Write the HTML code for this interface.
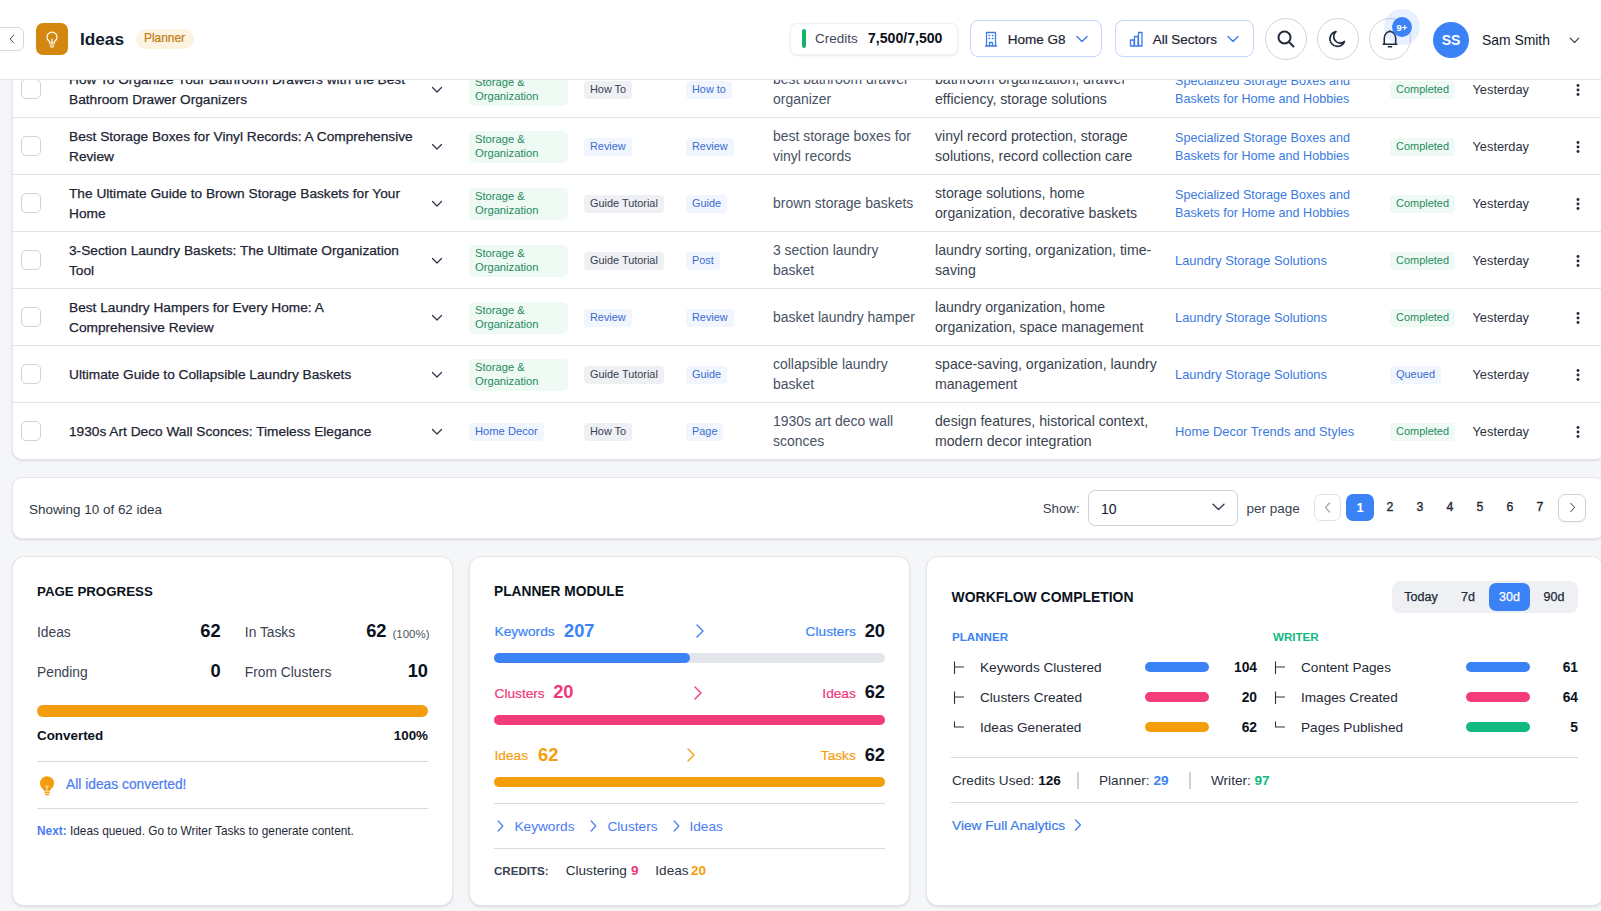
<!DOCTYPE html>
<html><head><meta charset="utf-8"><title>Ideas</title>
<style>
html,body{margin:0;padding:0;}
body{width:1601px;height:911px;overflow:hidden;position:relative;background:#f5f6f8;font-family:"Liberation Sans",sans-serif;}
.t{position:absolute;white-space:nowrap;}
.r{position:absolute;}
.r svg{display:block;}
.bd{position:absolute;border-radius:4px;white-space:nowrap;font-family:"Liberation Sans",sans-serif;}
</style></head><body>
<div class="r" style="left:12px;top:20px;width:1593px;height:440px;background:#fff;border:1px solid #e3e6ea;border-radius:0 0 10px 10px;border-top:none;box-sizing:border-box;box-shadow:0 1px 2px rgba(16,24,40,0.12);"></div>
<div class="r" style="left:12px;top:117px;width:1600px;height:1px;background:#dfe3e8;"></div>
<div class="r" style="left:21px;top:79px;width:20px;height:20px;border:1px solid #cdd3dc;border-radius:5px;box-sizing:border-box;background:#fff;"></div>
<div class="t " style="left:69px;top:69.70px;font-size:13.7px;line-height:20px;color:#1d2433;font-weight:400;-webkit-text-stroke:0.25px #1d2433;">How To Organize Your Bathroom Drawers with the Best</div><div class="t " style="left:69px;top:89.70px;font-size:13.7px;line-height:20px;color:#1d2433;font-weight:400;-webkit-text-stroke:0.25px #1d2433;">Bathroom Drawer Organizers</div>
<div class="r" style="left:431px;top:85.5px;"><svg width="12" height="8" viewBox="0 0 12 8"><path d="M1.5 1.5 L6 6 L10.5 1.5" fill="none" stroke="#2a3346" stroke-width="1.2" stroke-linecap="round" stroke-linejoin="round"/></svg></div>
<div class="r" style="left:469px;top:74.0px;width:99px;height:32px;background:#effaf5;border-radius:5px;"></div>
<div class="t " style="left:475px;top:75.30px;font-size:11.2px;line-height:14px;color:#1f8a5c;font-weight:400;">Storage &</div><div class="t " style="left:475px;top:89.30px;font-size:11.2px;line-height:14px;color:#1f8a5c;font-weight:400;">Organization</div>
<div class="bd" style="left:584px;top:81.0px;height:18px;line-height:16px;padding:0 6px;background:#eef0f3;color:#374151;font-size:10.9px;">How To</div>
<div class="bd" style="left:686px;top:81.0px;height:18px;line-height:16px;padding:0 6px;background:#f0f5fe;color:#3a6cd0;font-size:10.9px;">How to</div>
<div class="t " style="left:773px;top:69.00px;font-size:13.95px;line-height:20px;color:#485264;font-weight:400;">best bathroom drawer</div><div class="t " style="left:773px;top:89.00px;font-size:13.95px;line-height:20px;color:#485264;font-weight:400;">organizer</div>
<div class="t " style="left:935px;top:69.00px;font-size:14.1px;line-height:20px;color:#3a4250;font-weight:400;">bathroom organization, drawer</div><div class="t " style="left:935px;top:89.00px;font-size:14.1px;line-height:20px;color:#3a4250;font-weight:400;">efficiency, storage solutions</div>
<div class="t " style="left:1175px;top:71.70px;font-size:12.6px;line-height:18px;color:#3b7ae0;font-weight:400;">Specialized Storage Boxes and</div><div class="t " style="left:1175px;top:89.70px;font-size:12.6px;line-height:18px;color:#3b7ae0;font-weight:400;">Baskets for Home and Hobbies</div>
<div class="bd" style="left:1390px;top:81.0px;height:18px;line-height:16px;padding:0 6px;background:#effaf5;color:#1f8a5c;font-size:10.96px;">Completed</div>
<div class="t " style="left:1472.5px;top:81.76px;font-size:12.8px;line-height:16px;color:#2b3240;font-weight:400;">Yesterday</div>
<div class="r" style="left:1576px;top:83.0px;"><svg width="4" height="14" viewBox="0 0 4 14"><circle cx="2" cy="2.5" r="1.45" fill="#1f2a44"/><circle cx="2" cy="7" r="1.45" fill="#1f2a44"/><circle cx="2" cy="11.5" r="1.45" fill="#1f2a44"/></svg></div>
<div class="r" style="left:12px;top:174px;width:1600px;height:1px;background:#dfe3e8;"></div>
<div class="r" style="left:21px;top:136px;width:20px;height:20px;border:1px solid #cdd3dc;border-radius:5px;box-sizing:border-box;background:#fff;"></div>
<div class="t " style="left:69px;top:126.70px;font-size:13.7px;line-height:20px;color:#1d2433;font-weight:400;-webkit-text-stroke:0.25px #1d2433;">Best Storage Boxes for Vinyl Records: A Comprehensive</div><div class="t " style="left:69px;top:146.70px;font-size:13.7px;line-height:20px;color:#1d2433;font-weight:400;-webkit-text-stroke:0.25px #1d2433;">Review</div>
<div class="r" style="left:431px;top:142.5px;"><svg width="12" height="8" viewBox="0 0 12 8"><path d="M1.5 1.5 L6 6 L10.5 1.5" fill="none" stroke="#2a3346" stroke-width="1.2" stroke-linecap="round" stroke-linejoin="round"/></svg></div>
<div class="r" style="left:469px;top:131.0px;width:99px;height:32px;background:#effaf5;border-radius:5px;"></div>
<div class="t " style="left:475px;top:132.30px;font-size:11.2px;line-height:14px;color:#1f8a5c;font-weight:400;">Storage &</div><div class="t " style="left:475px;top:146.30px;font-size:11.2px;line-height:14px;color:#1f8a5c;font-weight:400;">Organization</div>
<div class="bd" style="left:584px;top:138.0px;height:18px;line-height:16px;padding:0 6px;background:#f0f5fe;color:#3a6cd0;font-size:10.9px;">Review</div>
<div class="bd" style="left:686px;top:138.0px;height:18px;line-height:16px;padding:0 6px;background:#f0f5fe;color:#3a6cd0;font-size:10.9px;">Review</div>
<div class="t " style="left:773px;top:126.00px;font-size:13.95px;line-height:20px;color:#485264;font-weight:400;">best storage boxes for</div><div class="t " style="left:773px;top:146.00px;font-size:13.95px;line-height:20px;color:#485264;font-weight:400;">vinyl records</div>
<div class="t " style="left:935px;top:126.00px;font-size:14.1px;line-height:20px;color:#3a4250;font-weight:400;">vinyl record protection, storage</div><div class="t " style="left:935px;top:146.00px;font-size:14.1px;line-height:20px;color:#3a4250;font-weight:400;">solutions, record collection care</div>
<div class="t " style="left:1175px;top:128.70px;font-size:12.6px;line-height:18px;color:#3b7ae0;font-weight:400;">Specialized Storage Boxes and</div><div class="t " style="left:1175px;top:146.70px;font-size:12.6px;line-height:18px;color:#3b7ae0;font-weight:400;">Baskets for Home and Hobbies</div>
<div class="bd" style="left:1390px;top:138.0px;height:18px;line-height:16px;padding:0 6px;background:#effaf5;color:#1f8a5c;font-size:10.96px;">Completed</div>
<div class="t " style="left:1472.5px;top:138.76px;font-size:12.8px;line-height:16px;color:#2b3240;font-weight:400;">Yesterday</div>
<div class="r" style="left:1576px;top:140.0px;"><svg width="4" height="14" viewBox="0 0 4 14"><circle cx="2" cy="2.5" r="1.45" fill="#1f2a44"/><circle cx="2" cy="7" r="1.45" fill="#1f2a44"/><circle cx="2" cy="11.5" r="1.45" fill="#1f2a44"/></svg></div>
<div class="r" style="left:12px;top:231px;width:1600px;height:1px;background:#dfe3e8;"></div>
<div class="r" style="left:21px;top:193px;width:20px;height:20px;border:1px solid #cdd3dc;border-radius:5px;box-sizing:border-box;background:#fff;"></div>
<div class="t " style="left:69px;top:183.70px;font-size:13.7px;line-height:20px;color:#1d2433;font-weight:400;-webkit-text-stroke:0.25px #1d2433;">The Ultimate Guide to Brown Storage Baskets for Your</div><div class="t " style="left:69px;top:203.70px;font-size:13.7px;line-height:20px;color:#1d2433;font-weight:400;-webkit-text-stroke:0.25px #1d2433;">Home</div>
<div class="r" style="left:431px;top:199.5px;"><svg width="12" height="8" viewBox="0 0 12 8"><path d="M1.5 1.5 L6 6 L10.5 1.5" fill="none" stroke="#2a3346" stroke-width="1.2" stroke-linecap="round" stroke-linejoin="round"/></svg></div>
<div class="r" style="left:469px;top:188.0px;width:99px;height:32px;background:#effaf5;border-radius:5px;"></div>
<div class="t " style="left:475px;top:189.30px;font-size:11.2px;line-height:14px;color:#1f8a5c;font-weight:400;">Storage &</div><div class="t " style="left:475px;top:203.30px;font-size:11.2px;line-height:14px;color:#1f8a5c;font-weight:400;">Organization</div>
<div class="bd" style="left:584px;top:195.0px;height:18px;line-height:16px;padding:0 6px;background:#eef0f3;color:#374151;font-size:10.9px;">Guide Tutorial</div>
<div class="bd" style="left:686px;top:195.0px;height:18px;line-height:16px;padding:0 6px;background:#f0f5fe;color:#3a6cd0;font-size:10.9px;">Guide</div>
<div class="t " style="left:773px;top:193.00px;font-size:13.95px;line-height:20px;color:#485264;font-weight:400;">brown storage baskets</div>
<div class="t " style="left:935px;top:183.00px;font-size:14.1px;line-height:20px;color:#3a4250;font-weight:400;">storage solutions, home</div><div class="t " style="left:935px;top:203.00px;font-size:14.1px;line-height:20px;color:#3a4250;font-weight:400;">organization, decorative baskets</div>
<div class="t " style="left:1175px;top:185.70px;font-size:12.6px;line-height:18px;color:#3b7ae0;font-weight:400;">Specialized Storage Boxes and</div><div class="t " style="left:1175px;top:203.70px;font-size:12.6px;line-height:18px;color:#3b7ae0;font-weight:400;">Baskets for Home and Hobbies</div>
<div class="bd" style="left:1390px;top:195.0px;height:18px;line-height:16px;padding:0 6px;background:#effaf5;color:#1f8a5c;font-size:10.96px;">Completed</div>
<div class="t " style="left:1472.5px;top:195.76px;font-size:12.8px;line-height:16px;color:#2b3240;font-weight:400;">Yesterday</div>
<div class="r" style="left:1576px;top:197.0px;"><svg width="4" height="14" viewBox="0 0 4 14"><circle cx="2" cy="2.5" r="1.45" fill="#1f2a44"/><circle cx="2" cy="7" r="1.45" fill="#1f2a44"/><circle cx="2" cy="11.5" r="1.45" fill="#1f2a44"/></svg></div>
<div class="r" style="left:12px;top:288px;width:1600px;height:1px;background:#dfe3e8;"></div>
<div class="r" style="left:21px;top:250px;width:20px;height:20px;border:1px solid #cdd3dc;border-radius:5px;box-sizing:border-box;background:#fff;"></div>
<div class="t " style="left:69px;top:240.70px;font-size:13.7px;line-height:20px;color:#1d2433;font-weight:400;-webkit-text-stroke:0.25px #1d2433;">3-Section Laundry Baskets: The Ultimate Organization</div><div class="t " style="left:69px;top:260.70px;font-size:13.7px;line-height:20px;color:#1d2433;font-weight:400;-webkit-text-stroke:0.25px #1d2433;">Tool</div>
<div class="r" style="left:431px;top:256.5px;"><svg width="12" height="8" viewBox="0 0 12 8"><path d="M1.5 1.5 L6 6 L10.5 1.5" fill="none" stroke="#2a3346" stroke-width="1.2" stroke-linecap="round" stroke-linejoin="round"/></svg></div>
<div class="r" style="left:469px;top:245.0px;width:99px;height:32px;background:#effaf5;border-radius:5px;"></div>
<div class="t " style="left:475px;top:246.30px;font-size:11.2px;line-height:14px;color:#1f8a5c;font-weight:400;">Storage &</div><div class="t " style="left:475px;top:260.30px;font-size:11.2px;line-height:14px;color:#1f8a5c;font-weight:400;">Organization</div>
<div class="bd" style="left:584px;top:252.0px;height:18px;line-height:16px;padding:0 6px;background:#eef0f3;color:#374151;font-size:10.9px;">Guide Tutorial</div>
<div class="bd" style="left:686px;top:252.0px;height:18px;line-height:16px;padding:0 6px;background:#f0f5fe;color:#3a6cd0;font-size:10.9px;">Post</div>
<div class="t " style="left:773px;top:240.00px;font-size:13.95px;line-height:20px;color:#485264;font-weight:400;">3 section laundry</div><div class="t " style="left:773px;top:260.00px;font-size:13.95px;line-height:20px;color:#485264;font-weight:400;">basket</div>
<div class="t " style="left:935px;top:240.00px;font-size:14.1px;line-height:20px;color:#3a4250;font-weight:400;">laundry sorting, organization, time-</div><div class="t " style="left:935px;top:260.00px;font-size:14.1px;line-height:20px;color:#3a4250;font-weight:400;">saving</div>
<div class="t " style="left:1175px;top:251.70px;font-size:12.9px;line-height:18px;color:#3b7ae0;font-weight:400;">Laundry Storage Solutions</div>
<div class="bd" style="left:1390px;top:252.0px;height:18px;line-height:16px;padding:0 6px;background:#effaf5;color:#1f8a5c;font-size:10.96px;">Completed</div>
<div class="t " style="left:1472.5px;top:252.76px;font-size:12.8px;line-height:16px;color:#2b3240;font-weight:400;">Yesterday</div>
<div class="r" style="left:1576px;top:254.0px;"><svg width="4" height="14" viewBox="0 0 4 14"><circle cx="2" cy="2.5" r="1.45" fill="#1f2a44"/><circle cx="2" cy="7" r="1.45" fill="#1f2a44"/><circle cx="2" cy="11.5" r="1.45" fill="#1f2a44"/></svg></div>
<div class="r" style="left:12px;top:345px;width:1600px;height:1px;background:#dfe3e8;"></div>
<div class="r" style="left:21px;top:307px;width:20px;height:20px;border:1px solid #cdd3dc;border-radius:5px;box-sizing:border-box;background:#fff;"></div>
<div class="t " style="left:69px;top:297.70px;font-size:13.7px;line-height:20px;color:#1d2433;font-weight:400;-webkit-text-stroke:0.25px #1d2433;">Best Laundry Hampers for Every Home: A</div><div class="t " style="left:69px;top:317.70px;font-size:13.7px;line-height:20px;color:#1d2433;font-weight:400;-webkit-text-stroke:0.25px #1d2433;">Comprehensive Review</div>
<div class="r" style="left:431px;top:313.5px;"><svg width="12" height="8" viewBox="0 0 12 8"><path d="M1.5 1.5 L6 6 L10.5 1.5" fill="none" stroke="#2a3346" stroke-width="1.2" stroke-linecap="round" stroke-linejoin="round"/></svg></div>
<div class="r" style="left:469px;top:302.0px;width:99px;height:32px;background:#effaf5;border-radius:5px;"></div>
<div class="t " style="left:475px;top:303.30px;font-size:11.2px;line-height:14px;color:#1f8a5c;font-weight:400;">Storage &</div><div class="t " style="left:475px;top:317.30px;font-size:11.2px;line-height:14px;color:#1f8a5c;font-weight:400;">Organization</div>
<div class="bd" style="left:584px;top:309.0px;height:18px;line-height:16px;padding:0 6px;background:#f0f5fe;color:#3a6cd0;font-size:10.9px;">Review</div>
<div class="bd" style="left:686px;top:309.0px;height:18px;line-height:16px;padding:0 6px;background:#f0f5fe;color:#3a6cd0;font-size:10.9px;">Review</div>
<div class="t " style="left:773px;top:307.00px;font-size:13.95px;line-height:20px;color:#485264;font-weight:400;">basket laundry hamper</div>
<div class="t " style="left:935px;top:297.00px;font-size:14.1px;line-height:20px;color:#3a4250;font-weight:400;">laundry organization, home</div><div class="t " style="left:935px;top:317.00px;font-size:14.1px;line-height:20px;color:#3a4250;font-weight:400;">organization, space management</div>
<div class="t " style="left:1175px;top:308.70px;font-size:12.9px;line-height:18px;color:#3b7ae0;font-weight:400;">Laundry Storage Solutions</div>
<div class="bd" style="left:1390px;top:309.0px;height:18px;line-height:16px;padding:0 6px;background:#effaf5;color:#1f8a5c;font-size:10.96px;">Completed</div>
<div class="t " style="left:1472.5px;top:309.76px;font-size:12.8px;line-height:16px;color:#2b3240;font-weight:400;">Yesterday</div>
<div class="r" style="left:1576px;top:311.0px;"><svg width="4" height="14" viewBox="0 0 4 14"><circle cx="2" cy="2.5" r="1.45" fill="#1f2a44"/><circle cx="2" cy="7" r="1.45" fill="#1f2a44"/><circle cx="2" cy="11.5" r="1.45" fill="#1f2a44"/></svg></div>
<div class="r" style="left:12px;top:402px;width:1600px;height:1px;background:#dfe3e8;"></div>
<div class="r" style="left:21px;top:364px;width:20px;height:20px;border:1px solid #cdd3dc;border-radius:5px;box-sizing:border-box;background:#fff;"></div>
<div class="t " style="left:69px;top:364.70px;font-size:13.7px;line-height:20px;color:#1d2433;font-weight:400;-webkit-text-stroke:0.25px #1d2433;">Ultimate Guide to Collapsible Laundry Baskets</div>
<div class="r" style="left:431px;top:370.5px;"><svg width="12" height="8" viewBox="0 0 12 8"><path d="M1.5 1.5 L6 6 L10.5 1.5" fill="none" stroke="#2a3346" stroke-width="1.2" stroke-linecap="round" stroke-linejoin="round"/></svg></div>
<div class="r" style="left:469px;top:359.0px;width:99px;height:32px;background:#effaf5;border-radius:5px;"></div>
<div class="t " style="left:475px;top:360.30px;font-size:11.2px;line-height:14px;color:#1f8a5c;font-weight:400;">Storage &</div><div class="t " style="left:475px;top:374.30px;font-size:11.2px;line-height:14px;color:#1f8a5c;font-weight:400;">Organization</div>
<div class="bd" style="left:584px;top:366.0px;height:18px;line-height:16px;padding:0 6px;background:#eef0f3;color:#374151;font-size:10.9px;">Guide Tutorial</div>
<div class="bd" style="left:686px;top:366.0px;height:18px;line-height:16px;padding:0 6px;background:#f0f5fe;color:#3a6cd0;font-size:10.9px;">Guide</div>
<div class="t " style="left:773px;top:354.00px;font-size:13.95px;line-height:20px;color:#485264;font-weight:400;">collapsible laundry</div><div class="t " style="left:773px;top:374.00px;font-size:13.95px;line-height:20px;color:#485264;font-weight:400;">basket</div>
<div class="t " style="left:935px;top:354.00px;font-size:14.1px;line-height:20px;color:#3a4250;font-weight:400;">space-saving, organization, laundry</div><div class="t " style="left:935px;top:374.00px;font-size:14.1px;line-height:20px;color:#3a4250;font-weight:400;">management</div>
<div class="t " style="left:1175px;top:365.70px;font-size:12.9px;line-height:18px;color:#3b7ae0;font-weight:400;">Laundry Storage Solutions</div>
<div class="bd" style="left:1390px;top:366.0px;height:18px;line-height:16px;padding:0 6px;background:#f0f5fe;color:#3a6cd0;font-size:10.96px;">Queued</div>
<div class="t " style="left:1472.5px;top:366.76px;font-size:12.8px;line-height:16px;color:#2b3240;font-weight:400;">Yesterday</div>
<div class="r" style="left:1576px;top:368.0px;"><svg width="4" height="14" viewBox="0 0 4 14"><circle cx="2" cy="2.5" r="1.45" fill="#1f2a44"/><circle cx="2" cy="7" r="1.45" fill="#1f2a44"/><circle cx="2" cy="11.5" r="1.45" fill="#1f2a44"/></svg></div>
<div class="r" style="left:21px;top:421px;width:20px;height:20px;border:1px solid #cdd3dc;border-radius:5px;box-sizing:border-box;background:#fff;"></div>
<div class="t " style="left:69px;top:421.70px;font-size:13.7px;line-height:20px;color:#1d2433;font-weight:400;-webkit-text-stroke:0.25px #1d2433;">1930s Art Deco Wall Sconces: Timeless Elegance</div>
<div class="r" style="left:431px;top:427.5px;"><svg width="12" height="8" viewBox="0 0 12 8"><path d="M1.5 1.5 L6 6 L10.5 1.5" fill="none" stroke="#2a3346" stroke-width="1.2" stroke-linecap="round" stroke-linejoin="round"/></svg></div>
<div class="bd" style="left:469px;top:423.0px;height:18px;line-height:16px;padding:0 6px;background:#f0f5fe;color:#3a6cd0;font-size:11.2px;">Home Decor</div>
<div class="bd" style="left:584px;top:423.0px;height:18px;line-height:16px;padding:0 6px;background:#eef0f3;color:#374151;font-size:10.9px;">How To</div>
<div class="bd" style="left:686px;top:423.0px;height:18px;line-height:16px;padding:0 6px;background:#f0f5fe;color:#3a6cd0;font-size:10.9px;">Page</div>
<div class="t " style="left:773px;top:411.00px;font-size:13.95px;line-height:20px;color:#485264;font-weight:400;">1930s art deco wall</div><div class="t " style="left:773px;top:431.00px;font-size:13.95px;line-height:20px;color:#485264;font-weight:400;">sconces</div>
<div class="t " style="left:935px;top:411.00px;font-size:14.1px;line-height:20px;color:#3a4250;font-weight:400;">design features, historical context,</div><div class="t " style="left:935px;top:431.00px;font-size:14.1px;line-height:20px;color:#3a4250;font-weight:400;">modern decor integration</div>
<div class="t " style="left:1175px;top:422.70px;font-size:12.9px;line-height:18px;color:#3b7ae0;font-weight:400;">Home Decor Trends and Styles</div>
<div class="bd" style="left:1390px;top:423.0px;height:18px;line-height:16px;padding:0 6px;background:#effaf5;color:#1f8a5c;font-size:10.96px;">Completed</div>
<div class="t " style="left:1472.5px;top:423.76px;font-size:12.8px;line-height:16px;color:#2b3240;font-weight:400;">Yesterday</div>
<div class="r" style="left:1576px;top:425.0px;"><svg width="4" height="14" viewBox="0 0 4 14"><circle cx="2" cy="2.5" r="1.45" fill="#1f2a44"/><circle cx="2" cy="7" r="1.45" fill="#1f2a44"/><circle cx="2" cy="11.5" r="1.45" fill="#1f2a44"/></svg></div>
<div class="r" style="left:0px;top:0px;width:1601px;height:79px;background:#fff;border-bottom:1px solid #e3e6eb;"></div>
<div class="r" style="left:-10px;top:27px;width:34px;height:24px;border:1px solid #d4d9e1;border-radius:6px;box-sizing:border-box;background:#fff;"></div>
<div class="r" style="left:8px;top:33px;"><svg width="8" height="12" viewBox="0 0 8 12"><path d="M5.8 2 L2.2 6 L5.8 10" fill="none" stroke="#4b5563" stroke-width="1.0" stroke-linecap="round" stroke-linejoin="round"/></svg></div>
<div class="r" style="left:36px;top:23px;width:32px;height:32px;background:#d4870e;border-radius:7px;"></div>
<div class="r" style="left:44px;top:30px;"><svg width="16" height="18" viewBox="0 0 16 18"><path d="M5.5 11.5 C3.8 10.4 3 8.8 3 7.2 A5 5 0 0 1 13 7.2 C13 8.8 12.2 10.4 10.5 11.5 L10.5 13 L5.5 13 Z" fill="none" stroke="#fff" stroke-width="1.2" stroke-linejoin="round"/><path d="M6 15 H10 M6.8 16.8 H9.2 M8 9 V13" stroke="#fff" stroke-width="1.2" stroke-linecap="round"/></svg></div>
<div class="t " style="left:80px;top:28.04px;font-size:17.2px;line-height:22px;color:#0f1b2e;font-weight:700;">Ideas</div>
<div class="r" style="left:136px;top:29px;width:58px;height:20px;background:#fdf3e1;border-radius:10px;"></div>
<div class="t " style="left:144px;top:31.08px;font-size:11.9px;line-height:15px;color:#c07a10;font-weight:400;-webkit-text-stroke:0.2px #c07a10;">Planner</div>
<div class="r" style="left:790px;top:23px;width:168px;height:32px;background:#fff;border:1px solid #eef0f3;border-radius:6px;box-shadow:0 1px 2px rgba(0,0,0,0.08);box-sizing:border-box;"></div>
<div class="r" style="left:802px;top:29px;width:4px;height:19px;background:#17b26a;border-radius:2px;"></div>
<div class="t " style="left:815px;top:29.82px;font-size:13.5px;line-height:17px;color:#3f4756;font-weight:400;">Credits</div>
<div class="t " style="left:868px;top:29.11px;font-size:14.1px;line-height:18px;color:#0b0f19;font-weight:700;">7,500/7,500</div>
<div class="r" style="left:970px;top:20px;width:132px;height:37px;border:1px solid #c4d6fa;border-radius:8px;box-sizing:border-box;background:#fff;"></div>
<div class="r" style="left:984px;top:31px;"><svg width="14" height="16" viewBox="0 0 14 16"><path d="M2.5 15 V1.5 H11.5 V15 M1 15 H13 M5.5 15 V11.5 H8.5 V15" fill="none" stroke="#3b7be8" stroke-width="1.3" stroke-linejoin="round"/><path d="M5 4.5 H5.6 M8.4 4.5 H9 M5 7.5 H5.6 M8.4 7.5 H9" stroke="#3b7be8" stroke-width="1.4" stroke-linecap="round"/></svg></div>
<div class="t " style="left:1007.7px;top:30.92px;font-size:13.5px;line-height:17px;color:#1d2433;font-weight:400;-webkit-text-stroke:0.2px #1d2433;">Home G8</div>
<div class="r" style="left:1076px;top:35px;"><svg width="12" height="8" viewBox="0 0 12 8"><path d="M1 1.5 L6 6.5 L11 1.5" fill="none" stroke="#3b7be8" stroke-width="1.4" stroke-linecap="round" stroke-linejoin="round"/></svg></div>
<div class="r" style="left:1115px;top:20px;width:139px;height:37px;border:1px solid #c4d6fa;border-radius:8px;box-sizing:border-box;background:#fff;"></div>
<div class="r" style="left:1129px;top:31px;"><svg width="15" height="16" viewBox="0 0 15 16"><path d="M1.5 15 V9 H5 V15 Z M5.5 15 V5.5 H9 V15 Z M9.5 15 V1.5 H13 V15 Z" fill="none" stroke="#3b7be8" stroke-width="1.3" stroke-linejoin="round"/></svg></div>
<div class="t " style="left:1152.7px;top:30.94px;font-size:13.45px;line-height:17px;color:#1d2433;font-weight:400;-webkit-text-stroke:0.2px #1d2433;">All Sectors</div>
<div class="r" style="left:1227px;top:35px;"><svg width="12" height="8" viewBox="0 0 12 8"><path d="M1 1.5 L6 6.5 L11 1.5" fill="none" stroke="#3b7be8" stroke-width="1.4" stroke-linecap="round" stroke-linejoin="round"/></svg></div>
<div class="r" style="left:1265px;top:18px;width:42px;height:42px;border:1px solid #cfd4dc;border-radius:50%;box-sizing:border-box;background:#fff;"></div>
<div class="r" style="left:1317px;top:18px;width:42px;height:42px;border:1px solid #cfd4dc;border-radius:50%;box-sizing:border-box;background:#fff;"></div>
<div class="r" style="left:1369px;top:18px;width:42px;height:42px;border:1px solid #cfd4dc;border-radius:50%;box-sizing:border-box;background:#fff;"></div>
<div class="r" style="left:1276px;top:29px;"><svg width="20" height="20" viewBox="0 0 20 20"><circle cx="8.5" cy="8.5" r="6" fill="none" stroke="#1f2a3c" stroke-width="2"/><path d="M13 13 L17.5 17.5" stroke="#1f2a3c" stroke-width="2" stroke-linecap="round"/></svg></div>
<div class="r" style="left:1328px;top:29px;"><svg width="20" height="20" viewBox="0 0 20 20"><path d="M16.5 12.5 A7.5 7.5 0 1 1 8 2.5 A6 6 0 0 0 16.5 12.5 Z" fill="none" stroke="#1f2a3c" stroke-width="1.7" stroke-linejoin="round"/></svg></div>
<div class="r" style="left:1380px;top:29px;"><svg width="20" height="20" viewBox="0 0 20 20"><path d="M4.3 15.3 V9 A5.7 6.5 0 0 1 15.7 9 V15.3 M3.2 15.3 H16.8" fill="none" stroke="#1f2a3c" stroke-width="1.6" stroke-linejoin="round" stroke-linecap="round"/><path d="M8.4 17.8 H11.6" stroke="#1f2a3c" stroke-width="1.5" stroke-linecap="round"/><path d="M10 1.8 V2.6" stroke="#1f2a3c" stroke-width="1.4" stroke-linecap="round"/></svg></div>
<div class="r" style="left:1384px;top:9px;width:36px;height:36px;background:rgba(59,130,246,0.12);border-radius:50%;"></div>
<div class="r" style="left:1392px;top:17px;width:20px;height:20px;background:#3b82f6;border-radius:50%;"></div>
<div class="t " style="left:1402px;top:21.71px;font-size:9.5px;line-height:12px;color:#fff;font-weight:700;width:20px;margin-left:-10px;text-align:center;">9+</div>
<div class="r" style="left:1433px;top:22px;width:36px;height:36px;background:#3b82f6;border-radius:50%;"></div>
<div class="t " style="left:1451px;top:31.15px;font-size:14px;line-height:18px;color:#fff;font-weight:700;width:36px;margin-left:-18px;text-align:center;">SS</div>
<div class="t " style="left:1482px;top:32.38px;font-size:13.9px;line-height:17px;color:#111827;font-weight:400;">Sam Smith</div>
<div class="r" style="left:1569px;top:37px;"><svg width="11" height="7" viewBox="0 0 11 7"><path d="M1.2 1.2 L5.5 5.5 L9.8 1.2" fill="none" stroke="#374151" stroke-width="1.1" stroke-linecap="round" stroke-linejoin="round"/></svg></div>
<div class="r" style="left:12px;top:477px;width:1593px;height:62px;background:#fff;border:1px solid #e3e6ea;border-radius:10px;box-sizing:border-box;box-shadow:0 1px 2px rgba(16,24,40,0.12);"></div>
<div class="t " style="left:29px;top:500.54px;font-size:13.45px;line-height:17px;color:#2f3746;font-weight:400;">Showing 10 of 62 idea</div>
<div class="t " style="left:1042.7px;top:500.29px;font-size:13.3px;line-height:17px;color:#3a4250;font-weight:400;">Show:</div>
<div class="r" style="left:1088px;top:490px;width:150px;height:36px;border:1px solid #cdd3dc;border-radius:7px;box-sizing:border-box;background:#fff;"></div>
<div class="t " style="left:1101px;top:499.65px;font-size:14px;line-height:18px;color:#111827;font-weight:400;">10</div>
<div class="r" style="left:1212px;top:503px;"><svg width="13" height="8" viewBox="0 0 13 8"><path d="M1 1.2 L6.5 6.5 L12 1.2" fill="none" stroke="#374151" stroke-width="1.4" stroke-linecap="round" stroke-linejoin="round"/></svg></div>
<div class="t " style="left:1246.4px;top:500.22px;font-size:13.5px;line-height:17px;color:#3a4250;font-weight:400;">per page</div>
<div class="r" style="left:1314px;top:494px;width:27px;height:27px;border:1px solid #dde1e7;border-radius:7px;box-sizing:border-box;background:#fff;"></div>
<div class="r" style="left:1324px;top:502px;"><svg width="7" height="11" viewBox="0 0 7 11"><path d="M5.5 1 L1.5 5.5 L5.5 10" fill="none" stroke="#a0a7b3" stroke-width="1.2" stroke-linecap="round" stroke-linejoin="round"/></svg></div>
<div class="r" style="left:1346px;top:494px;width:28px;height:27px;background:#3b82f6;border-radius:7px;"></div>
<div class="t " style="left:1360px;top:499.50px;font-size:13px;line-height:16px;color:#fff;font-weight:700;width:20px;margin-left:-10px;text-align:center;">1</div>
<div class="t " style="left:1390px;top:500.04px;font-size:12.3px;line-height:15px;color:#1f2937;font-weight:400;width:20px;margin-left:-10px;text-align:center;-webkit-text-stroke:0.35px #1f2937;">2</div>
<div class="t " style="left:1420px;top:500.04px;font-size:12.3px;line-height:15px;color:#1f2937;font-weight:400;width:20px;margin-left:-10px;text-align:center;-webkit-text-stroke:0.35px #1f2937;">3</div>
<div class="t " style="left:1450px;top:500.04px;font-size:12.3px;line-height:15px;color:#1f2937;font-weight:400;width:20px;margin-left:-10px;text-align:center;-webkit-text-stroke:0.35px #1f2937;">4</div>
<div class="t " style="left:1480px;top:500.04px;font-size:12.3px;line-height:15px;color:#1f2937;font-weight:400;width:20px;margin-left:-10px;text-align:center;-webkit-text-stroke:0.35px #1f2937;">5</div>
<div class="t " style="left:1510px;top:500.04px;font-size:12.3px;line-height:15px;color:#1f2937;font-weight:400;width:20px;margin-left:-10px;text-align:center;-webkit-text-stroke:0.35px #1f2937;">6</div>
<div class="t " style="left:1540px;top:500.04px;font-size:12.3px;line-height:15px;color:#1f2937;font-weight:400;width:20px;margin-left:-10px;text-align:center;-webkit-text-stroke:0.35px #1f2937;">7</div>
<div class="r" style="left:1558px;top:494px;width:28px;height:28px;border:1px solid #cdd3dc;border-radius:7px;box-sizing:border-box;background:#fff;box-shadow:0 1px 1px rgba(0,0,0,0.05);"></div>
<div class="r" style="left:1569px;top:502px;"><svg width="7" height="11" viewBox="0 0 7 11"><path d="M1.8 1.3 L5.5 5.5 L1.8 9.7" fill="none" stroke="#374151" stroke-width="1.0" stroke-linecap="round" stroke-linejoin="round"/></svg></div>
<div class="r" style="left:12px;top:556px;width:441px;height:350px;background:#fff;border:1px solid #e3e6ea;border-radius:12px;box-sizing:border-box;box-shadow:0 1px 2px rgba(16,24,40,0.12);"></div>
<div class="r" style="left:469px;top:556px;width:441px;height:350px;background:#fff;border:1px solid #e3e6ea;border-radius:12px;box-sizing:border-box;box-shadow:0 1px 2px rgba(16,24,40,0.12);"></div>
<div class="r" style="left:926px;top:556px;width:678px;height:350px;background:#fff;border:1px solid #e3e6ea;border-radius:12px;box-sizing:border-box;box-shadow:0 1px 2px rgba(16,24,40,0.12);"></div>
<div class="t " style="left:37px;top:583.19px;font-size:13.3px;line-height:17px;color:#0b1220;font-weight:700;">PAGE PROGRESS</div>
<div class="t " style="left:37px;top:624.42px;font-size:13.8px;line-height:17px;color:#3a4250;font-weight:400;">Ideas</div>
<div class="t " style="right:1380.3px;text-align:right;top:619.16px;font-size:18.3px;line-height:23px;color:#0b1220;font-weight:700;">62</div>
<div class="t " style="left:244.8px;top:624.42px;font-size:13.8px;line-height:17px;color:#3a4250;font-weight:400;">In Tasks</div>
<div class="t " style="right:1214.5px;text-align:right;top:619.16px;font-size:18.3px;line-height:23px;color:#0b1220;font-weight:700;">62</div>
<div class="t " style="left:392.5px;top:626.52px;font-size:11.5px;line-height:14px;color:#4b5563;font-weight:400;">(100%)</div>
<div class="t " style="left:37px;top:664.22px;font-size:13.8px;line-height:17px;color:#3a4250;font-weight:400;">Pending</div>
<div class="t " style="right:1380.3px;text-align:right;top:659.16px;font-size:18.3px;line-height:23px;color:#0b1220;font-weight:700;">0</div>
<div class="t " style="left:244.8px;top:664.22px;font-size:13.8px;line-height:17px;color:#3a4250;font-weight:400;">From Clusters</div>
<div class="t " style="right:1173px;text-align:right;top:659.16px;font-size:18.3px;line-height:23px;color:#0b1220;font-weight:700;">10</div>
<div class="r" style="left:37px;top:705px;width:391px;height:12px;background:#f39c0f;border-radius:6px;"></div>
<div class="t " style="left:37px;top:727.36px;font-size:13.4px;line-height:17px;color:#0b1220;font-weight:700;">Converted</div>
<div class="t " style="right:1173px;text-align:right;top:727.36px;font-size:13.4px;line-height:17px;color:#0b1220;font-weight:700;">100%</div>
<div class="r" style="left:37px;top:761px;width:391px;height:1px;background:#d5dae1;"></div>
<div class="r" style="left:38px;top:776px;"><svg width="18" height="20" viewBox="0 0 18 20"><path d="M4.2 12.2 C2.8 11 2 9.3 2 7.3 A7 7 0 0 1 16 7.3 C16 9.3 15.2 11 13.8 12.2 L11.2 15.5 H6.8 Z" fill="#f39c0f"/><path d="M7.2 10.3 H10.8 M9 10.3 V15" stroke="#fde3b5" stroke-width="1.1"/><path d="M7 16.7 H11.3 M7.6 18.6 H10.6" stroke="#f39c0f" stroke-width="1.3" stroke-linecap="round"/></svg></div>
<div class="t " style="left:66px;top:775.92px;font-size:13.8px;line-height:17px;color:#4a7cf2;font-weight:400;-webkit-text-stroke:0.2px #4a7cf2;">All ideas converted!</div>
<div class="r" style="left:37px;top:808px;width:391px;height:1px;background:#d5dae1;"></div>
<div class="t " style="left:37px;top:823.69px;font-size:11.85px;line-height:15px;color:#1f2937;font-weight:400;"><b style="color:#4a7cf2">Next:</b> Ideas queued. Go to Writer Tasks to generate content.</div>
<div class="t " style="left:494px;top:583.04px;font-size:13.75px;line-height:17px;color:#0b1220;font-weight:700;">PLANNER MODULE</div>
<div class="t " style="left:494.5px;top:623.15px;font-size:13.7px;line-height:17px;color:#3b82f6;font-weight:400;-webkit-text-stroke:0.2px #3b82f6;">Keywords</div><div class="t " style="left:564.0px;top:618.56px;font-size:18.3px;line-height:23px;color:#3b82f6;font-weight:700;">207</div><div class="r" style="left:695px;top:623.9px;"><svg width="10" height="14" viewBox="0 0 10 14"><path d="M2 1 L8 7 L2 13" fill="none" stroke="#3b82f6" stroke-width="1.4" stroke-linecap="round" stroke-linejoin="round"/></svg></div><div class="t " style="right:716px;text-align:right;top:618.56px;font-size:18.3px;line-height:23px;color:#0b1220;font-weight:700;">20</div><div class="t " style="right:745.2px;text-align:right;top:623.15px;font-size:13.7px;line-height:17px;color:#3b82f6;font-weight:400;-webkit-text-stroke:0.2px #3b82f6;">Clusters</div><div class="r" style="left:494px;top:653px;width:391px;height:10px;background:#e2e5ea;border-radius:5px;"></div><div class="r" style="left:494px;top:653px;width:196px;height:10px;background:#3b82f6;border-radius:5px;"></div>
<div class="t " style="left:494.5px;top:685.05px;font-size:13.7px;line-height:17px;color:#f0387a;font-weight:400;-webkit-text-stroke:0.2px #f0387a;">Clusters</div><div class="t " style="left:553.1999999999999px;top:680.46px;font-size:18.3px;line-height:23px;color:#f0387a;font-weight:700;">20</div><div class="r" style="left:693px;top:685.8px;"><svg width="10" height="14" viewBox="0 0 10 14"><path d="M2 1 L8 7 L2 13" fill="none" stroke="#f0387a" stroke-width="1.4" stroke-linecap="round" stroke-linejoin="round"/></svg></div><div class="t " style="right:716px;text-align:right;top:680.46px;font-size:18.3px;line-height:23px;color:#0b1220;font-weight:700;">62</div><div class="t " style="right:745.2px;text-align:right;top:685.05px;font-size:13.7px;line-height:17px;color:#f0387a;font-weight:400;-webkit-text-stroke:0.2px #f0387a;">Ideas</div><div class="r" style="left:494px;top:715px;width:391px;height:10px;background:#e2e5ea;border-radius:5px;"></div><div class="r" style="left:494px;top:715px;width:391px;height:10px;background:#f43b7c;border-radius:5px;"></div>
<div class="t " style="left:494.5px;top:747.35px;font-size:13.7px;line-height:17px;color:#f59e0b;font-weight:400;-webkit-text-stroke:0.2px #f59e0b;">Ideas</div><div class="t " style="left:538.0999999999999px;top:742.76px;font-size:18.3px;line-height:23px;color:#f59e0b;font-weight:700;">62</div><div class="r" style="left:686px;top:748.1px;"><svg width="10" height="14" viewBox="0 0 10 14"><path d="M2 1 L8 7 L2 13" fill="none" stroke="#f59e0b" stroke-width="1.4" stroke-linecap="round" stroke-linejoin="round"/></svg></div><div class="t " style="right:716px;text-align:right;top:742.76px;font-size:18.3px;line-height:23px;color:#0b1220;font-weight:700;">62</div><div class="t " style="right:745.2px;text-align:right;top:747.35px;font-size:13.7px;line-height:17px;color:#f59e0b;font-weight:400;-webkit-text-stroke:0.2px #f59e0b;">Tasks</div><div class="r" style="left:494px;top:777px;width:391px;height:10px;background:#e2e5ea;border-radius:5px;"></div><div class="r" style="left:494px;top:777px;width:391px;height:10px;background:#f59e0b;border-radius:5px;"></div>
<div class="r" style="left:494px;top:803px;width:391px;height:1px;background:#d5dae1;"></div>
<div class="r" style="left:497px;top:820px;"><svg width="7" height="12" viewBox="0 0 7 12"><path d="M1.2 1 L5.8 6 L1.2 11" fill="none" stroke="#4a7cf2" stroke-width="1.2" stroke-linecap="round" stroke-linejoin="round"/></svg></div>
<div class="t " style="left:514.4px;top:818.15px;font-size:13.7px;line-height:17px;color:#4a7cf2;font-weight:400;">Keywords</div>
<div class="r" style="left:590px;top:820px;"><svg width="7" height="12" viewBox="0 0 7 12"><path d="M1.2 1 L5.8 6 L1.2 11" fill="none" stroke="#4a7cf2" stroke-width="1.2" stroke-linecap="round" stroke-linejoin="round"/></svg></div>
<div class="t " style="left:607.4px;top:818.15px;font-size:13.7px;line-height:17px;color:#4a7cf2;font-weight:400;">Clusters</div>
<div class="r" style="left:673px;top:820px;"><svg width="7" height="12" viewBox="0 0 7 12"><path d="M1.2 1 L5.8 6 L1.2 11" fill="none" stroke="#4a7cf2" stroke-width="1.2" stroke-linecap="round" stroke-linejoin="round"/></svg></div>
<div class="t " style="left:689.4px;top:818.15px;font-size:13.7px;line-height:17px;color:#4a7cf2;font-weight:400;">Ideas</div>
<div class="r" style="left:494px;top:848px;width:391px;height:1px;background:#d5dae1;"></div>
<div class="t " style="left:494px;top:864.20px;font-size:11.55px;line-height:14px;color:#374151;font-weight:700;">CREDITS:</div>
<div class="t " style="left:565.7px;top:861.99px;font-size:13.6px;line-height:17px;color:#2b3240;font-weight:400;">Clustering</div>
<div class="t " style="left:631px;top:861.99px;font-size:13.6px;line-height:17px;color:#f0387a;font-weight:700;">9</div>
<div class="t " style="left:655.3px;top:861.99px;font-size:13.6px;line-height:17px;color:#2b3240;font-weight:400;">Ideas</div>
<div class="t " style="left:691px;top:861.99px;font-size:13.6px;line-height:17px;color:#f59e0b;font-weight:700;">20</div>
<div class="t " style="left:951.6px;top:588.67px;font-size:13.95px;line-height:17px;color:#0b1220;font-weight:700;">WORKFLOW COMPLETION</div>
<div class="r" style="left:1392px;top:581px;width:186px;height:32px;background:#eef0f3;border-radius:8px;"></div>
<div class="r" style="left:1489px;top:583px;width:41px;height:28px;background:#3b82f6;border-radius:7px;"></div>
<div class="t " style="left:1421px;top:589.17px;font-size:12.5px;line-height:16px;color:#1f2937;font-weight:400;width:60px;margin-left:-30px;text-align:center;-webkit-text-stroke:0.25px #1f2937;">Today</div>
<div class="t " style="left:1468px;top:589.17px;font-size:12.5px;line-height:16px;color:#1f2937;font-weight:400;width:60px;margin-left:-30px;text-align:center;-webkit-text-stroke:0.25px #1f2937;">7d</div>
<div class="t " style="left:1509.5px;top:589.17px;font-size:12.5px;line-height:16px;color:#fff;font-weight:400;width:60px;margin-left:-30px;text-align:center;-webkit-text-stroke:0.25px #fff;">30d</div>
<div class="t " style="left:1554px;top:589.17px;font-size:12.5px;line-height:16px;color:#1f2937;font-weight:400;width:60px;margin-left:-30px;text-align:center;-webkit-text-stroke:0.25px #1f2937;">90d</div>
<div class="t " style="left:952px;top:629.98px;font-size:11.6px;line-height:14px;color:#3b82f6;font-weight:700;">PLANNER</div>
<div class="t " style="left:1273px;top:629.98px;font-size:11.6px;line-height:14px;color:#10b981;font-weight:700;">WRITER</div>
<div class="r" style="left:953px;top:661px;"><svg width="12" height="14" viewBox="0 0 12 14"><path d="M1.5 0.5 V13 M1.5 6 H11" fill="none" stroke="#2b3240" stroke-width="1.1"/></svg></div>
<div class="t " style="left:980px;top:658.79px;font-size:13.6px;line-height:17px;color:#1f2937;font-weight:400;">Keywords Clustered</div>
<div class="r" style="left:1145px;top:662px;width:64px;height:10px;background:#3b82f6;border-radius:5px;"></div>
<div class="t " style="right:344px;text-align:right;top:658.72px;font-size:13.8px;line-height:17px;color:#0b1220;font-weight:700;">104</div>
<div class="r" style="left:953px;top:691px;"><svg width="12" height="14" viewBox="0 0 12 14"><path d="M1.5 0.5 V13 M1.5 6 H11" fill="none" stroke="#2b3240" stroke-width="1.1"/></svg></div>
<div class="t " style="left:980px;top:688.79px;font-size:13.6px;line-height:17px;color:#1f2937;font-weight:400;">Clusters Created</div>
<div class="r" style="left:1145px;top:692px;width:64px;height:10px;background:#f43b7c;border-radius:5px;"></div>
<div class="t " style="right:344px;text-align:right;top:688.72px;font-size:13.8px;line-height:17px;color:#0b1220;font-weight:700;">20</div>
<div class="r" style="left:953px;top:721px;"><svg width="12" height="14" viewBox="0 0 12 14"><path d="M1.5 0.5 V6 H11" fill="none" stroke="#2b3240" stroke-width="1.1"/></svg></div>
<div class="t " style="left:980px;top:718.79px;font-size:13.6px;line-height:17px;color:#1f2937;font-weight:400;">Ideas Generated</div>
<div class="r" style="left:1145px;top:722px;width:64px;height:10px;background:#f59e0b;border-radius:5px;"></div>
<div class="t " style="right:344px;text-align:right;top:718.72px;font-size:13.8px;line-height:17px;color:#0b1220;font-weight:700;">62</div>
<div class="r" style="left:1274px;top:661px;"><svg width="12" height="14" viewBox="0 0 12 14"><path d="M1.5 0.5 V13 M1.5 6 H11" fill="none" stroke="#2b3240" stroke-width="1.1"/></svg></div>
<div class="t " style="left:1301px;top:658.79px;font-size:13.6px;line-height:17px;color:#1f2937;font-weight:400;">Content Pages</div>
<div class="r" style="left:1466px;top:662px;width:64px;height:10px;background:#3b82f6;border-radius:5px;"></div>
<div class="t " style="right:23px;text-align:right;top:658.72px;font-size:13.8px;line-height:17px;color:#0b1220;font-weight:700;">61</div>
<div class="r" style="left:1274px;top:691px;"><svg width="12" height="14" viewBox="0 0 12 14"><path d="M1.5 0.5 V13 M1.5 6 H11" fill="none" stroke="#2b3240" stroke-width="1.1"/></svg></div>
<div class="t " style="left:1301px;top:688.79px;font-size:13.6px;line-height:17px;color:#1f2937;font-weight:400;">Images Created</div>
<div class="r" style="left:1466px;top:692px;width:64px;height:10px;background:#f43b7c;border-radius:5px;"></div>
<div class="t " style="right:23px;text-align:right;top:688.72px;font-size:13.8px;line-height:17px;color:#0b1220;font-weight:700;">64</div>
<div class="r" style="left:1274px;top:721px;"><svg width="12" height="14" viewBox="0 0 12 14"><path d="M1.5 0.5 V6 H11" fill="none" stroke="#2b3240" stroke-width="1.1"/></svg></div>
<div class="t " style="left:1301px;top:718.79px;font-size:13.6px;line-height:17px;color:#1f2937;font-weight:400;">Pages Published</div>
<div class="r" style="left:1466px;top:722px;width:64px;height:10px;background:#10b981;border-radius:5px;"></div>
<div class="t " style="right:23px;text-align:right;top:718.72px;font-size:13.8px;line-height:17px;color:#0b1220;font-weight:700;">5</div>
<div class="r" style="left:951px;top:757px;width:627px;height:1px;background:#d5dae1;"></div>
<div class="t " style="left:952px;top:771.79px;font-size:13.6px;line-height:17px;color:#2b3240;font-weight:400;">Credits Used: <b style="color:#0b1220">126</b></div>
<div class="r" style="left:1077px;top:772px;width:1.5px;height:17px;background:#c9d1dc;"></div>
<div class="t " style="left:1099px;top:771.79px;font-size:13.6px;line-height:17px;color:#2b3240;font-weight:400;">Planner: <b style="color:#3b82f6">29</b></div>
<div class="r" style="left:1189px;top:772px;width:1.5px;height:17px;background:#c9d1dc;"></div>
<div class="t " style="left:1211px;top:771.79px;font-size:13.6px;line-height:17px;color:#2b3240;font-weight:400;">Writer: <b style="color:#10b981">97</b></div>
<div class="r" style="left:951px;top:802px;width:627px;height:1px;background:#d5dae1;"></div>
<div class="t " style="left:952px;top:817.45px;font-size:13.7px;line-height:17px;color:#3b7be8;font-weight:400;-webkit-text-stroke:0.2px #3b7be8;">View Full Analytics</div>
<div class="r" style="left:1074px;top:819px;"><svg width="8" height="12" viewBox="0 0 8 12"><path d="M1.5 1 L6.5 6 L1.5 11" fill="none" stroke="#3b7be8" stroke-width="1.2" stroke-linecap="round" stroke-linejoin="round"/></svg></div>
</body></html>
